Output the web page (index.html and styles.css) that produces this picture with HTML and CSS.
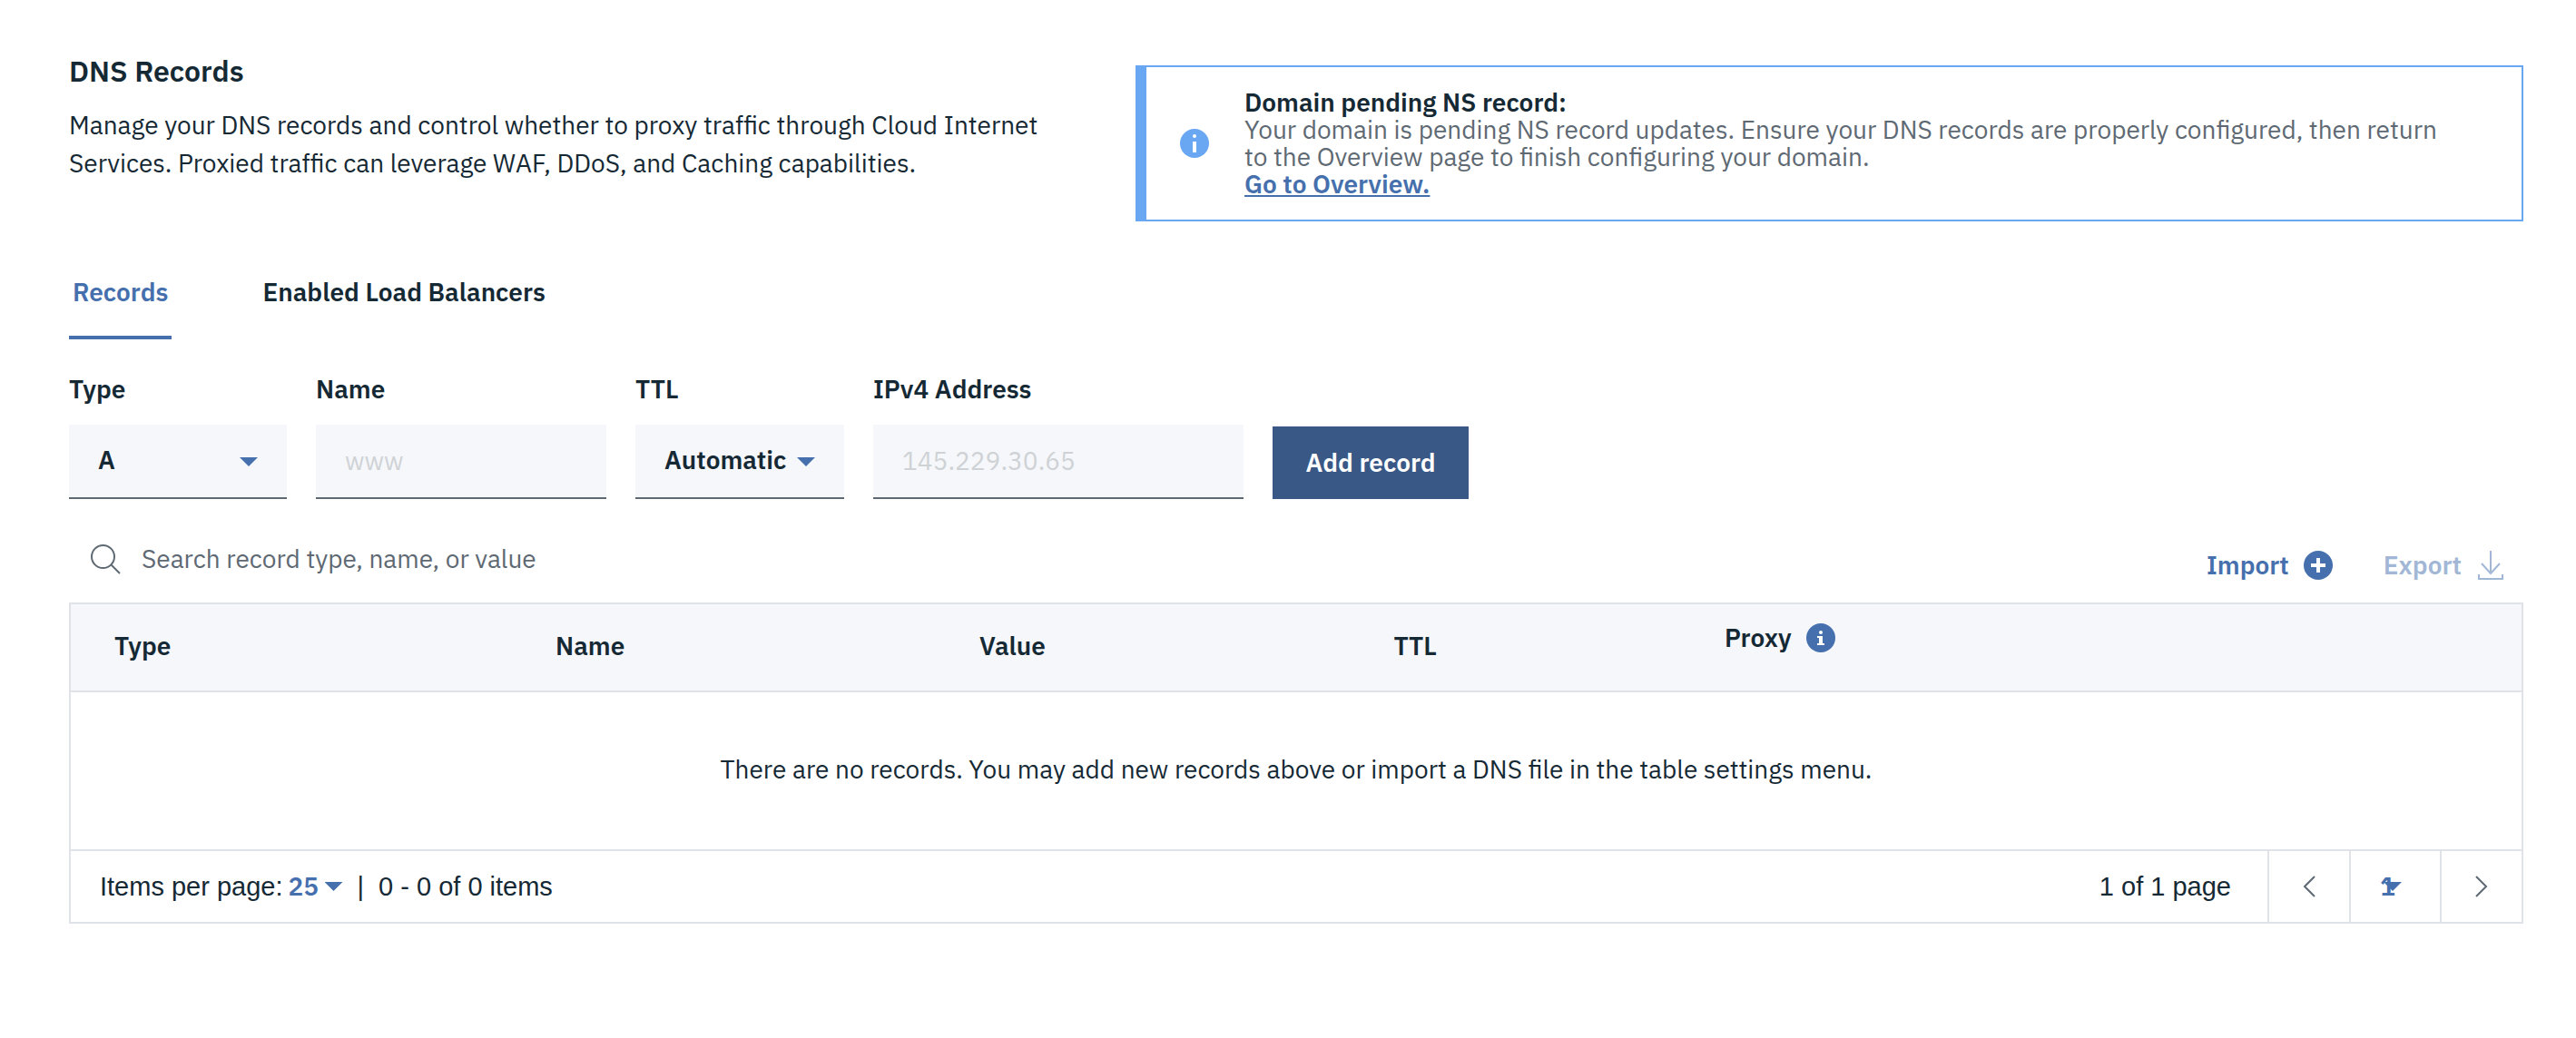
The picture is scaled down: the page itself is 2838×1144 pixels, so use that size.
FILE: index.html
```html
<!DOCTYPE html>
<html lang="en">
<head>
<meta charset="utf-8">
<meta name="viewport" content="width=device-width, initial-scale=1">
<title>DNS Records</title>
<link rel="stylesheet" href="styles.css">
</head>
<body>
<main class="page">
  <header class="intro">
    <div class="intro-text">
      <h1 class="title">DNS Records</h1>
      <p class="lead">Manage your DNS records and control whether to proxy traffic through Cloud Internet Services. Proxied traffic can leverage WAF, DDoS, and Caching capabilities.</p>
    </div>
    <section class="notice" aria-label="Notification">
      <svg class="icon" viewBox="0 0 32 32" aria-hidden="true"><circle cx="16" cy="16" r="16" fill="#6aa7f3"/><circle cx="16" cy="8" r="2" fill="#fff"/><path d="M14 14h4v12h-4z" fill="#fff"/></svg>
      <div class="notice-text">
        <strong class="notice-title">Domain pending NS record:</strong>
        <p class="notice-body">Your domain is pending NS record updates. Ensure your DNS records are properly configured, then return to the Overview page to finish configuring your domain.</p>
        <a class="notice-link" href="#overview">Go to Overview.</a>
      </div>
    </section>
  </header>

  <div class="tabs" role="tablist">
    <button class="tab tab-active" type="button" role="tab" aria-selected="true">Records</button>
    <button class="tab" type="button" role="tab" aria-selected="false">Enabled Load Balancers</button>
  </div>

  <form class="record-form">
    <div class="field field-type">
      <label class="label" for="type">Type</label>
      <div class="select">
        <select class="control" id="type"><option>A</option></select>
        <span class="caret"></span>
      </div>
    </div>
    <div class="field field-name">
      <label class="label" for="name">Name</label>
      <input class="control" id="name" type="text" placeholder="www">
    </div>
    <div class="field field-ttl">
      <label class="label" for="ttl">TTL</label>
      <div class="select">
        <select class="control" id="ttl"><option>Automatic</option></select>
        <span class="caret"></span>
      </div>
    </div>
    <div class="field field-address">
      <label class="label" for="address">IPv4 Address</label>
      <input class="control" id="address" type="text" placeholder="145.229.30.65">
    </div>
    <button class="add" type="button">Add record</button>
  </form>

  <div class="toolbar">
    <label class="search">
      <svg class="icon" viewBox="0 0 32 32" fill="none" stroke="#5e6973" stroke-width="2" aria-hidden="true"><circle cx="13.5" cy="13.5" r="12.5"/><path d="M22 22l10 10"/></svg>
      <input class="search-input" type="search" aria-label="Search records" placeholder="Search record type, name, or value">
    </label>
    <div class="actions">
      <button class="action" type="button">Import
        <svg class="icon" viewBox="0 0 32 32" aria-hidden="true"><circle cx="16" cy="16" r="16" fill="#4670ad"/><path d="M14 8h4v6h6v4h-6v6h-4v-6H8v-4h6z" fill="#fff"/></svg>
      </button>
      <button class="action action-off" type="button" disabled>Export
        <svg class="icon" viewBox="0 0 32 32" fill="none" stroke="#a2b7d6" stroke-width="2" aria-hidden="true"><path d="M16 0v25M6 14l10 11 10-11M3 26v5h26v-5"/></svg>
      </button>
    </div>
  </div>

  <section class="panel">
    <table class="records">
      <thead>
        <tr>
          <th class="col-type">Type</th>
          <th class="col-name">Name</th>
          <th class="col-value">Value</th>
          <th class="col-ttl">TTL</th>
          <th class="col-proxy"><span class="proxy">Proxy
            <svg class="icon" viewBox="0 0 32 32" aria-hidden="true"><circle cx="16" cy="16" r="16" fill="#4670ad"/><circle cx="16" cy="10" r="2" fill="#fff"/><path d="M12 14h6v8h2v2h-8v-2h2v-6h-2z" fill="#fff"/></svg>
          </span></th>
        </tr>
      </thead>
      <tbody>
        <tr><td class="empty" colspan="5">There are no records. You may add new records above or import a DNS file in the table settings menu.</td></tr>
      </tbody>
    </table>
    <footer class="pager">
      <div class="pager-left">
        <label for="per-page">Items per page:</label>
        <div class="mini">
          <select class="mini-control" id="per-page"><option>25</option></select>
          <span class="caret"></span>
        </div>
        <span class="bar">|</span>
        <span>0 - 0 of 0 items</span>
      </div>
      <div class="pager-right">
        <span class="count">1 of 1 page</span>
        <button class="step" type="button" aria-label="Previous page"><svg class="chevron" viewBox="0 0 16 24" aria-hidden="true"><path d="M14 1L3 12l11 11"/></svg></button>
        <div class="page-pick">
          <div class="mini mini-page">
            <select class="mini-control" aria-label="Page number"><option>1</option></select>
            <span class="caret"></span>
          </div>
        </div>
        <button class="step" type="button" aria-label="Next page"><svg class="chevron" viewBox="0 0 16 24" aria-hidden="true"><path d="M2 1l11 11L2 23"/></svg></button>
      </div>
    </footer>
  </section>
</main>
</body>
</html>
```
FILE: styles.css
```css
:root {
  --ink: #152935;
  --muted: #5e6973;
  --blue: #4670ad;
  --info: #6aa7f3;
  --line: #dfe2e6;
  --fill: #f5f7fb;
}

* { box-sizing: border-box; }

body {
  margin: 0;
  background: #fff;
  color: var(--ink);
  font: 400 28px/42px "IBM Plex Sans", Roboto, "Liberation Sans", sans-serif;
}

button, input, select {
  margin: 0;
  padding: 0;
  border: 0;
  border-radius: 0;
  background: none;
  color: inherit;
  font: inherit;
  appearance: none;
  outline: none;
}

.icon { flex: none; width: 32px; height: 32px; display: block; overflow: visible; }

.page { padding: 57px 58px 58px 76px; }

.intro {
  display: grid;
  grid-template-columns: minmax(0, 1099fr) minmax(0, 1529fr);
  column-gap: 76px;
  align-items: start;
}
.title { margin: 0 0 18px; font-size: 32px; line-height: 42px; font-weight: 600; }
.lead { margin: 0; }

.notice {
  display: flex;
  align-items: center;
  gap: 39px;
  margin-top: 15px;
  padding: 24px 80px 24px 37px;
  border: 2px solid var(--info);
  border-left-width: 12px;
}
.notice-text { line-height: 30px; }
.notice-title { display: block; font-weight: 600; }
.notice-body { margin: 0; color: var(--muted); }
.notice-link { display: block; width: fit-content; color: var(--blue); font-weight: 600; }

.tabs { display: flex; gap: 96px; margin-top: 57px; }
.tab { padding: 0 4px 27px; border-bottom: 4px solid transparent; font-weight: 600; }
.tab-active { color: var(--blue); border-color: var(--blue); }

.record-form { display: flex; align-items: flex-end; gap: 32px; margin-top: 34px; }
.field { display: flex; flex-direction: column; gap: 18px; }
.field-type { width: 240px; }
.field-name { width: 320px; }
.field-ttl { width: 230px; }
.field-address { width: 408px; }
.label { font-weight: 600; }
.control {
  width: 100%;
  height: 82px;
  padding: 0 32px 2px;
  background: var(--fill);
  border-bottom: 2px solid var(--muted);
}
.control::placeholder { color: #cfd2d5; opacity: 1; }
.select, .mini { display: grid; align-items: center; }
.select > *, .mini > * { grid-area: 1 / 1; }
.select .control { font-weight: 600; }
.caret {
  justify-self: end;
  width: 20px;
  height: 10px;
  background: var(--blue);
  clip-path: polygon(0 0, 100% 0, 50% 100%);
  pointer-events: none;
}
.select .caret { margin-right: 32px; }
.add { width: 216px; height: 80px; background: #395886; color: #fff; font-weight: 600; }

.toolbar { display: flex; justify-content: space-between; padding: 45px 20px 21px 24px; }
.search { display: flex; flex: 1; gap: 24px; align-items: center; height: 42px; }
.search-input { flex: 1; max-width: 800px; height: 42px; }
.search-input::placeholder { color: var(--muted); opacity: 1; }
.actions { display: flex; gap: 56px; padding-top: 8px; }
.action { display: flex; align-items: center; gap: 16px; color: var(--blue); font-weight: 600; line-height: 40px; }
.action-off { color: #a2b7d6; }

.panel { border: 2px solid var(--line); }
.records { width: 100%; table-layout: fixed; border-collapse: collapse; }
.records th { height: 96px; padding: 0 0 4px 48px; background: var(--fill); border-bottom: 2px solid var(--line); text-align: left; font-weight: 600; }
.records .col-type { width: 18%; }
.records .col-name { width: 17.3%; }
.records .col-value { width: 16.9%; }
.records .col-ttl { width: 13.5%; }
.records .col-proxy { vertical-align: top; }
.proxy { display: flex; align-items: center; gap: 16px; padding-top: 16px; }
.empty { height: 174px; padding: 0 0 4px; text-align: center; }

.pager {
  display: flex;
  justify-content: space-between;
  height: 80px;
  border-top: 2px solid var(--line);
  font-family: "Helvetica Neue", "Liberation Sans", Arial, sans-serif;
  font-size: 29px;
}
.pager-left { display: flex; align-items: center; padding-left: 32px; }
.mini { width: 60px; margin-left: 6px; color: var(--blue); }
.mini-control { width: 100%; height: 42px; font: 600 28px/42px "IBM Plex Sans", Roboto, sans-serif; }
.bar { margin: 0 16px; }
.pager-right { display: flex; align-items: stretch; }
.count { align-self: center; padding-right: 40px; }
.step { display: flex; align-items: center; justify-content: center; width: 90px; border-left: 2px solid var(--line); }
.chevron { width: 16px; height: 24px; fill: none; stroke: var(--muted); stroke-width: 2; }
.page-pick { display: flex; align-items: center; width: 100px; padding-left: 32px; border-left: 2px solid var(--line); }
.mini-page { width: 24px; margin: 0; }
```
